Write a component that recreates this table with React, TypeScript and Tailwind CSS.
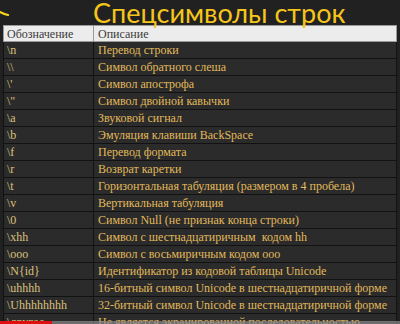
const rows: [string, string][] = [
  ['\\n', 'Перевод строки'],
  ['\\\\', 'Символ обратного слеша'],
  ["\\'", 'Символ апострофа'],
  ['\\"', 'Символ двойной кавычки'],
  ['\\a', 'Звуковой сигнал'],
  ['\\b', 'Эмуляция клавиши BackSpace'],
  ['\\f', 'Перевод формата'],
  ['\\r', 'Возврат каретки'],
  ['\\t', 'Горизонтальная табуляция (размером в 4 пробела)'],
  ['\\v', 'Вертикальная табуляция'],
  ['\\0', 'Символ Null (не признак конца строки)'],
  ['\\xhh', 'Символ с шестнадцатиричным  кодом hh'],
  ['\\ooo', 'Символ с восьмиричным кодом ooo'],
  ['\\N{id}', 'Идентификатор из кодовой таблицы Unicode'],
  ['\\uhhhh', '16-битный символ Unicode в шестнадцатиричной форме'],
  ['\\Uhhhhhhhh', '32-битный символ Unicode в шестнадцатиричной форме'],
  ['\\другое', 'Не является экранированной последовательностью'],
];

export default function App() {
  return (
    <div className="relative h-[324px] w-[400px] overflow-hidden bg-[#212121]">
      {/* arrow tip from the slide edge */}
      <svg className="absolute left-0 top-[10px]" width="10" height="8" viewBox="0 0 10 8">
        <path d="M0 2 Q4 4 8 5" stroke="#f2d21b" strokeWidth="2.2" fill="none" strokeLinecap="round" />
      </svg>

      <h1 className="h-[25px] pl-[93px] font-['Lato',sans-serif] text-[27px] leading-[25px] text-[#f6c51c]">
        Спецсимволы строк
      </h1>

      <div className="px-[3px]">
        <table className="w-full table-fixed border-collapse font-['Liberation_Serif',serif] text-[12px]">
          <thead>
            <tr className="h-[16px] bg-[#ececec] text-[#3a3a3a]">
              <th className="w-[90px] border border-[#9a9a9a] px-[3px] text-left font-normal leading-[14px]">Обозначение</th>
              <th className="border border-[#9a9a9a] px-[4px] text-left font-normal leading-[14px]">Описание</th>
            </tr>
          </thead>
          <tbody>
            {rows.map(([code, desc]) => (
              <tr key={code} className="h-[17px] bg-[#2a2b2a]">
                <td className="whitespace-pre border border-[#121212] px-[3px] leading-[15px] text-[#dcc07e]">{code}</td>
                <td className="whitespace-pre border border-[#121212] px-[4px] leading-[15px] text-[#e2b95c]">{desc}</td>
              </tr>
            ))}
          </tbody>
        </table>
      </div>

      {/* video progress bar */}
      <div className="absolute bottom-0 left-0 flex h-[3px] w-full">
        <div className="w-[52px] bg-[#e01010]" />
        <div className="flex-1 bg-[#8a8a8a]/70" />
      </div>
    </div>
  );
}
